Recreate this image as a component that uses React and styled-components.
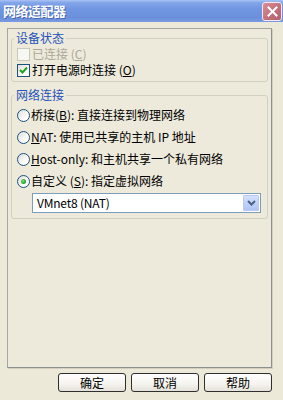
import React from "react";
import styled, { createGlobalStyle } from "styled-components";

const Global = createGlobalStyle`
  html, body { margin: 0; padding: 0; background: #ECE9D8; }
  * { box-sizing: border-box; }
`;

const FONT = `"Noto Sans CJK SC", "Liberation Sans", sans-serif`;

const Window = styled.div`
  width: 283px;
  height: 400px;
  background: #ECE9D8;
  display: flex;
  flex-direction: column;
  font-family: ${FONT};
  font-size: 12px;
  color: #000;
  overflow: hidden;
`;

const TitleBar = styled.div`
  height: 22px;
  flex: none;
  display: flex;
  align-items: center;
  justify-content: space-between;
  padding: 0 1px 1px 3px;
  background: linear-gradient(
    to bottom,
    #a9c3f4 0%,
    #83a6ea 12%,
    #7196e1 40%,
    #6b8fdc 80%,
    #7a9be0 100%
  );
`;

const Title = styled.div`
  color: #fff;
  font-weight: bold;
  font-size: 13px;
  line-height: 14px;
  letter-spacing: -0.5px;
  text-shadow: 1px 1px 0 rgba(40, 60, 130, 0.5);
`;

const CloseButton = styled.div`
  width: 20px;
  height: 19px;
  margin-top: 1px;
  border: 1px solid #f2e8ee;
  border-radius: 3px;
  background: linear-gradient(135deg, #d88f98 0%, #c2707c 55%, #b5606d 100%);
  display: flex;
  align-items: center;
  justify-content: center;
`;

const Panel = styled.div`
  margin: 6px 0 0 7px;
  width: 265px;
  height: 340px;
  flex: none;
  border: 1px solid #a3a6a2;
  border-right-color: #8d918d;
  border-bottom-color: #8d918d;
  box-shadow: 1px 1px 0 #d3d0c2;
  padding: 3px 3px 0 3px;
  background: #EDEADB;
`;

const Group = styled.fieldset`
  margin: ${(p) => p.$top || 0}px 0 0 0;
  padding: ${(p) => p.$pad};
  border: 1px solid #D0D0BF;
  border-radius: 3px;
  min-width: 0;
`;

const Legend = styled.legend`
  margin-left: -3px;
  padding: 0 2px;
  color: #2452b8;
  font-size: 12px;
  line-height: 12px;
  height: 12px;
`;

const OptionRow = styled.label`
  display: flex;
  align-items: center;
  height: ${(p) => p.$h}px;
  color: ${(p) => (p.$disabled ? "#aca899" : "#000")};
  line-height: 12px;
  white-space: pre;
`;

const Box = styled.span`
  width: 13px;
  height: 13px;
  flex: none;
  margin-right: 2px;
  border: 1px solid ${(p) => (p.$disabled ? "#cac8bb" : "#1c5180")};
  background: ${(p) =>
    p.$disabled ? "#f7f7f3" : "linear-gradient(135deg, #dcdcd7 0%, #ffffff 70%)"};
  display: flex;
  align-items: center;
  justify-content: center;
`;

const Radio = styled.span`
  width: 13px;
  height: 13px;
  flex: none;
  margin-right: 1px;
  border: 1px solid #1c5180;
  border-radius: 50%;
  background: linear-gradient(135deg, #dcdcd7 0%, #ffffff 70%);
  display: flex;
  align-items: center;
  justify-content: center;
`;

const Dot = styled.span`
  width: 5px;
  height: 5px;
  border-radius: 50%;
  background: radial-gradient(circle at 40% 40%, #7fe07f 0%, #2aa52a 60%, #1c8a1c 100%);
`;

const Select = styled.div`
  margin: 1px 0 0 15px;
  width: 229px;
  height: 20px;
  border: 1px solid #7f9db9;
  background: #fff;
  display: flex;
  align-items: center;
  justify-content: space-between;
  padding: 0 1px 0 4px;
`;

const SelectText = styled.span`
  font-size: 12px;
  line-height: 12px;
  letter-spacing: -0.2px;
`;

const SelectButton = styled.span`
  width: 16px;
  height: 16px;
  border: 1px solid #b9c9ef;
  border-radius: 1px;
  background: linear-gradient(to bottom, #d4e0fb 0%, #bccff9 60%, #b0c5f5 100%);
  display: flex;
  align-items: center;
  justify-content: center;
`;

const Buttons = styled.div`
  display: flex;
  justify-content: flex-end;
  gap: 5px;
  padding-right: 11px;
  margin-top: 5px;
`;

const Button = styled.div`
  width: 68px;
  height: 19px;
  border: 1px solid #2f2f2f;
  border-radius: 3px;
  background: linear-gradient(to bottom, #ffffff 0%, #f4f3ee 60%, #e3e1d8 100%);
  display: flex;
  align-items: center;
  justify-content: center;
  font-size: 12px;
  line-height: 12px;
`;

export default function App() {
  return (
    <>
      <Global />
      <Window>
        <TitleBar>
          <Title>网络适配器</Title>
          <CloseButton>
            <svg width="11" height="11" viewBox="0 0 11 11">
              <path d="M1.5 1.5 L9.5 9.5 M9.5 1.5 L1.5 9.5" stroke="#fff" strokeWidth="2" strokeLinecap="square" />
            </svg>
          </CloseButton>
        </TitleBar>
        <Panel>
          <Group $pad="2px 0 3px 5px">
            <Legend>设备状态</Legend>
            <OptionRow $h={16} $disabled>
              <Box $disabled />
              已连接 (<u>C</u>)
            </OptionRow>
            <OptionRow $h={16}>
              <Box>
                <svg width="9" height="9" viewBox="0 0 9 9">
                  <path d="M1 4 L3.5 6.5 L8 1.5" fill="none" stroke="#21a121" strokeWidth="2" />
                </svg>
              </Box>
              打开电源时连接 (<u>O</u>)
            </OptionRow>
          </Group>
          <Group $top={7} $pad="3px 0 5px 5px">
            <Legend>网络连接</Legend>
            <OptionRow $h={22}>
              <Radio />
              桥接(<u>B</u>): 直接连接到物理网络
            </OptionRow>
            <OptionRow $h={22}>
              <Radio />
              <u>N</u>AT: 使用已共享的主机 IP 地址
            </OptionRow>
            <OptionRow $h={22}>
              <Radio />
              <u>H</u>ost-only: 和主机共享一个私有网络
            </OptionRow>
            <OptionRow $h={22}>
              <Radio>
                <Dot />
              </Radio>
              自定义 (<u>S</u>): 指定虚拟网络
            </OptionRow>
            <Select>
              <SelectText>VMnet8 (NAT)</SelectText>
              <SelectButton>
                <svg width="9" height="6" viewBox="0 0 9 6">
                  <path d="M1 1 L4.5 4.5 L8 1" fill="none" stroke="#4d6185" strokeWidth="2" />
                </svg>
              </SelectButton>
            </Select>
          </Group>
        </Panel>
        <Buttons>
          <Button>确定</Button>
          <Button>取消</Button>
          <Button>帮助</Button>
        </Buttons>
      </Window>
    </>
  );
}
